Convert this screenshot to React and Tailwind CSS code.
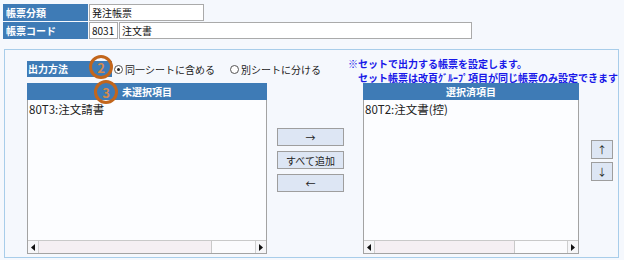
import React from "react";

function Label({ children, className = "" }) {
  return (
    <div className={"flex items-center bg-[#3e7bb6] text-white font-bold text-[10px] leading-none " + className}>
      {children}
    </div>
  );
}

function Tri({ dir }) {
  return (
    <svg width="4" height="7" viewBox="0 0 4 7">
      {dir === "l" ? <path d="M4 0 L0 3.5 L4 7Z" fill="#111" /> : <path d="M0 0 L4 3.5 L0 7Z" fill="#111" />}
    </svg>
  );
}

function HScroll({ thumb }) {
  return (
    <div className="flex h-[13px] border-t border-[#c9c9c9] bg-[#fbfbfd]">
      <div className="w-[11px] flex items-center justify-center border-r border-[#cfcfcf] bg-[#f6f6f8]">
        <Tri dir="l" />
      </div>
      <div className="h-full bg-[#f5eff3] border-r border-[#c9c9c9]" style={{ width: thumb }} />
      <div className="flex-1" />
      <div className="w-[11px] flex items-center justify-center border-l border-[#cfcfcf] bg-[#f6f6f8]">
        <Tri dir="r" />
      </div>
    </div>
  );
}

function ListBox({ title, item, thumb, width }) {
  return (
    <div className="flex flex-col h-[171px]" style={{ width }}>
      <div className="h-[17px] bg-[#3e7bb6] text-white font-bold text-[10px] leading-none flex items-center justify-center">
        {title}
      </div>
      <div className="flex-1 flex flex-col border border-t-0 border-[#a3a3a3] bg-[#fcfdff]">
        <div className="flex-1 pl-[1px] pt-[2px] text-[11.5px] leading-[14px] text-[#222]">{item}</div>
        <HScroll thumb={thumb} />
      </div>
    </div>
  );
}

function Btn({ children, className = "" }) {
  return (
    <div className={"flex items-center justify-center bg-[#dde6f4] border border-[#9e9e9e] text-[10px] text-[#222] " + className}>
      {children}
    </div>
  );
}

function Radio({ checked }) {
  return (
    <div className="w-[9px] h-[9px] rounded-full border border-[#555] bg-white flex items-center justify-center">
      {checked && <div className="w-[3px] h-[3px] rounded-full bg-[#222]" />}
    </div>
  );
}

function Mark({ n, className }) {
  return (
    <div className={"absolute w-[24px] h-[24px] rounded-full border-[3px] border-[#c2661c] flex items-center justify-center text-[13px] font-bold text-[#d58a4a] leading-none " + className}>
      {n}
    </div>
  );
}

export default function App() {
  return (
    <div className="relative w-[624px] h-[260px] overflow-hidden bg-[#f5f8fd] font-['Noto_Sans_CJK_JP',sans-serif]">
      <div className="flex flex-col gap-[1px] pt-[4px] pl-[3px]">
        <div className="flex h-[17px]">
          <Label className="w-[85px] pl-[3px]">帳票分類</Label>
          <div className="ml-[1px] w-[115px] flex items-center pl-[2px] bg-white border border-[#aaaaaa] text-[10px] text-[#111]">
            発注帳票
          </div>
        </div>
        <div className="flex h-[17px]">
          <Label className="w-[85px] pl-[3px]">帳票コード</Label>
          <div className="ml-[1px] w-[29px] flex items-center pl-[2px] bg-white border border-[#aaaaaa] text-[10px] text-[#111]">
            8031
          </div>
          <div className="ml-[1px] w-[353px] flex items-center pl-[2px] bg-white border border-[#aaaaaa] text-[10px] text-[#111]">
            注文書
          </div>
        </div>
      </div>

      <div className="mt-[10px] ml-[4px] w-[615px] h-[209px] border border-[#a8cdea] pl-[22px] pt-[11px] flex flex-col">
        <div className="flex h-[22px] items-start">
          <div className="flex items-center w-[326px] h-[16px]">
            <Label className="w-[85px] h-[16px] pl-[1px]">出力方法</Label>
            <div className="ml-[2px]"><Radio checked /></div>
            <span className="ml-[2px] text-[10px] text-[#222]">同一シートに含める</span>
            <div className="ml-[15px]"><Radio /></div>
            <span className="ml-[2px] text-[10px] text-[#222]">別シートに分ける</span>
          </div>
          <div className="-mt-[4px] text-[10px] leading-[14px] font-bold text-[#1818e8] whitespace-nowrap">
            <div>※セットで出力する帳票を設定します。</div>
            <div className="pl-[10px]">セット帳票は改頁ｸﾞﾙｰﾌﾟ項目が同じ帳票のみ設定できます</div>
          </div>
        </div>

        <div className="flex items-start">
          <ListBox title="未選択項目" item="80T3:注文請書" thumb={173} width={240} />
          <div className="ml-[10px] mt-[45px] w-[67px] flex flex-col gap-[5px]">
            <Btn className="h-[18px]">→</Btn>
            <Btn className="h-[18px]">すべて追加</Btn>
            <Btn className="h-[18px]">←</Btn>
          </div>
          <div className="ml-[19px]">
            <ListBox title="選択済項目" item="80T2:注文書(控)" thumb={140} width={216} />
          </div>
          <div className="ml-[12px] mt-[57px] w-[22px] flex flex-col gap-[3px]">
            <Btn className="h-[19px]">↑</Btn>
            <Btn className="h-[19px]">↓</Btn>
          </div>
        </div>
      </div>

      <Mark n="2" className="left-[89px] top-[55px]" />
      <Mark n="3" className="left-[94px] top-[80px]" />
    </div>
  );
}
